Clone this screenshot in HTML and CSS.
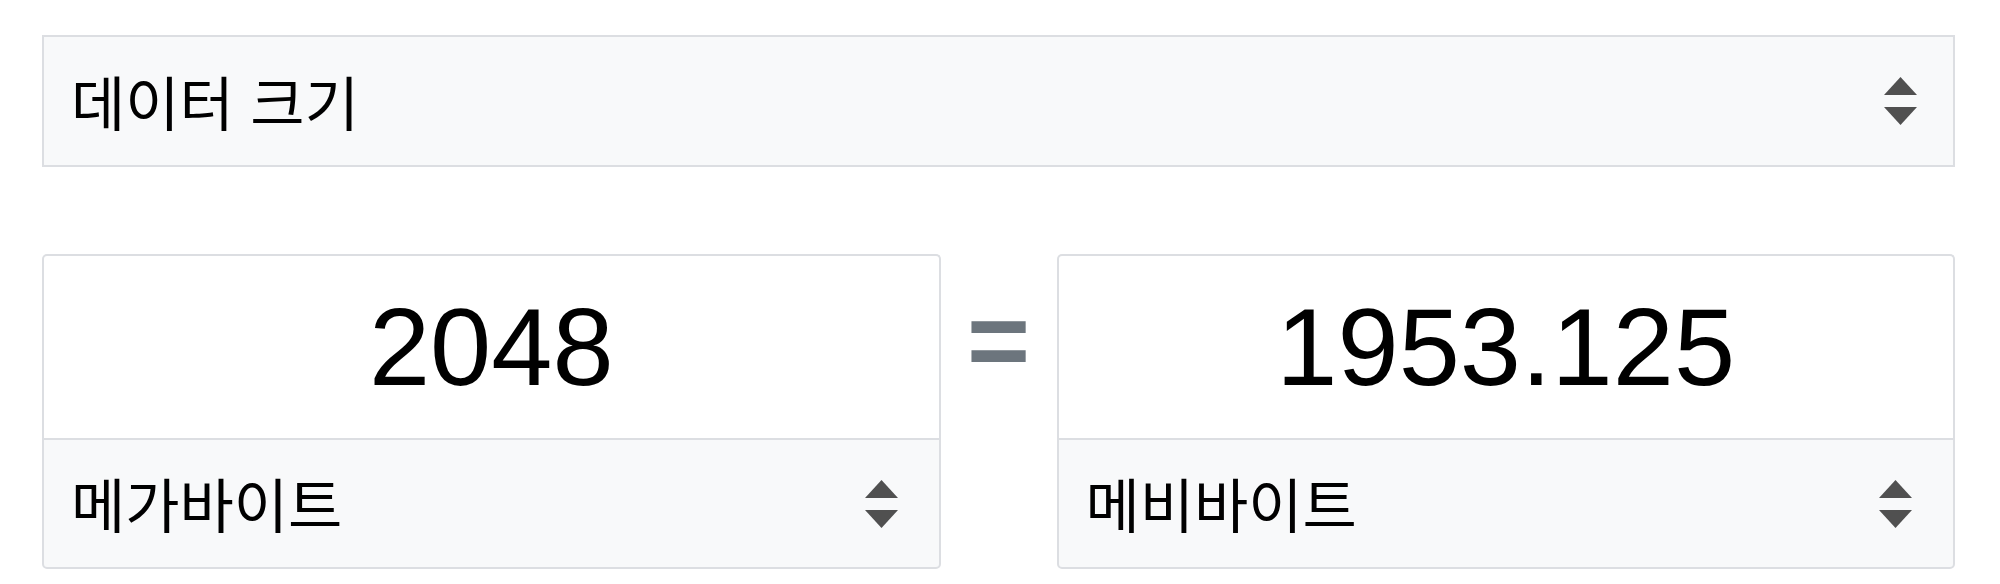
FILE: index.html
```html
<!DOCTYPE html>
<html lang="ko">
<head>
<meta charset="utf-8">
<title>데이터 크기 변환</title>
<link rel="stylesheet" href="styles.css">
</head>
<body>
<div class="converter">
  <div class="select select-category">
    <span class="select-label">데이터 크기</span>
    <svg class="caret" viewBox="0 0 33 48" aria-hidden="true"><polygon points="0,18 16.5,0 33,18"/><polygon points="0,30 33,30 16.5,48"/></svg>
  </div>
  <div class="row">
    <div class="unit-group">
      <div class="value-box">2048</div>
      <div class="select select-unit">
        <span class="select-label">메가바이트</span>
        <svg class="caret" viewBox="0 0 33 48" aria-hidden="true"><polygon points="0,18 16.5,0 33,18"/><polygon points="0,30 33,30 16.5,48"/></svg>
      </div>
    </div>
    <div class="equals">=</div>
    <div class="unit-group">
      <div class="value-box">1953.125</div>
      <div class="select select-unit">
        <span class="select-label">메비바이트</span>
        <svg class="caret" viewBox="0 0 33 48" aria-hidden="true"><polygon points="0,18 16.5,0 33,18"/><polygon points="0,30 33,30 16.5,48"/></svg>
      </div>
    </div>
  </div>
</div>
</body>
</html>
```
FILE: styles.css
```css
html, body {
  margin: 0;
  padding: 0;
  background: #ffffff;
}
body {
  padding: 35px 45px 0 42px;
  font-family: "Noto Sans CJK KR", "Liberation Sans", sans-serif;
  color: #000;
}
.converter {
  display: flex;
  flex-direction: column;
  gap: 87px;
}
.select {
  box-sizing: border-box;
  display: flex;
  align-items: center;
  justify-content: space-between;
  background: #f8f9fa;
  border: 2px solid #dcdee2;
  padding: 0 36px 0 27px;
  font-size: 59px;
  line-height: 1;
}
.select-category {
  height: 132px;
}
.select-label {
  display: block;
  padding-bottom: 2px;
}
.caret {
  width: 33px;
  height: 48px;
  fill: #505050;
  flex: none;
}
.row {
  display: grid;
  grid-template-columns: 1fr 116px 1fr;
  align-items: start;
}
.unit-group {
  display: flex;
  flex-direction: column;
}
.value-box {
  box-sizing: border-box;
  height: 184px;
  background: #fff;
  border: 2px solid #dcdee2;
  border-bottom: none;
  border-radius: 5px 5px 0 0;
  display: flex;
  align-items: center;
  justify-content: center;
  font-family: "Liberation Sans", Arial, sans-serif;
  font-size: 110px;
  line-height: 1;
}
.select-unit {
  height: 131px;
  border-radius: 0 0 5px 5px;
  padding-right: 41px;
}
.equals {
  box-sizing: border-box;
  height: 184px;
  padding-bottom: 12px;
  display: flex;
  align-items: center;
  justify-content: center;
  font-family: "Liberation Sans", Arial, sans-serif;
  font-size: 108px;
  font-weight: bold;
  color: #6c757d;
  line-height: 1;
}
```
